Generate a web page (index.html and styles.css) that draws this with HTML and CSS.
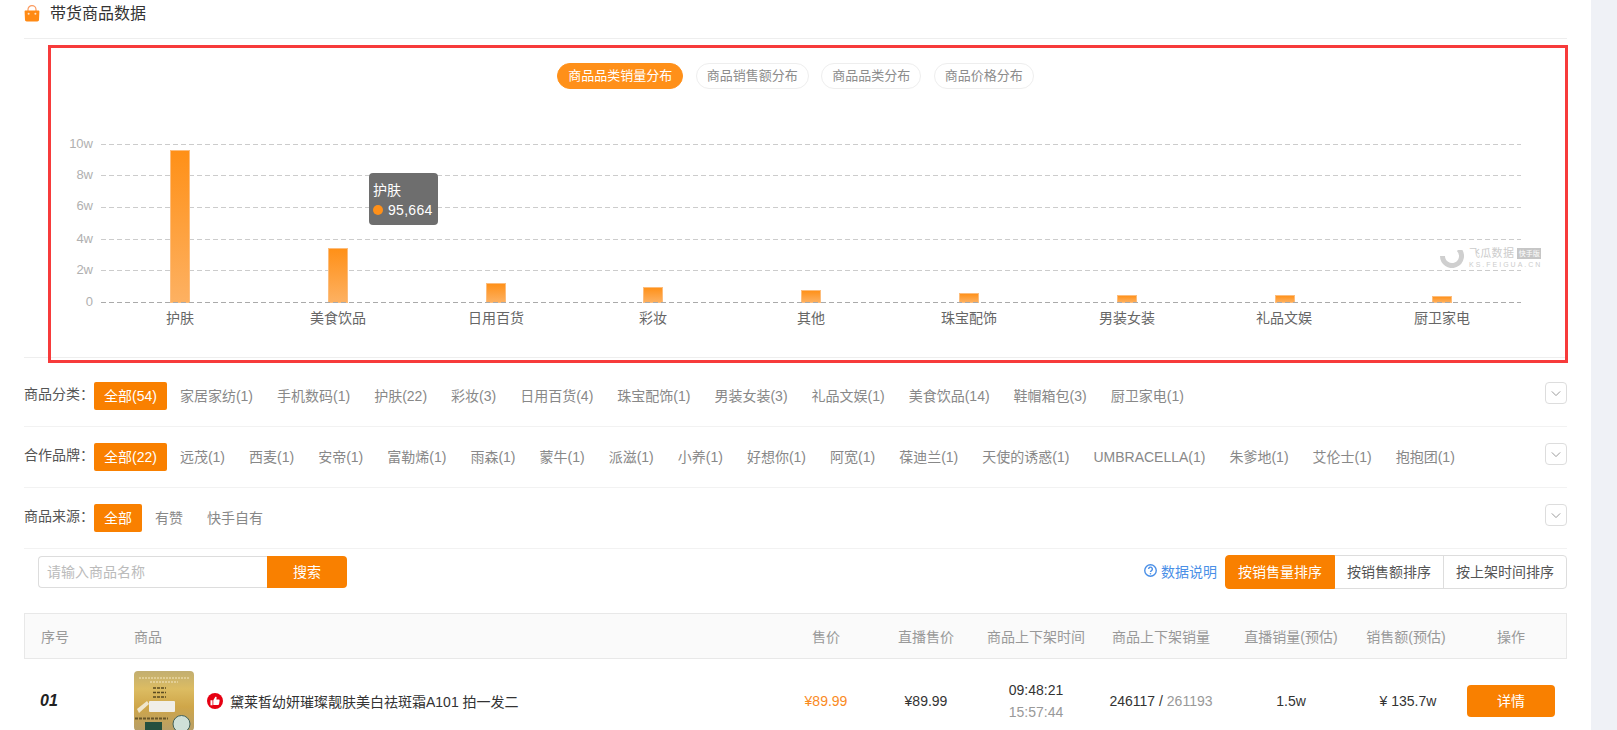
FILE: index.html
```html
<!DOCTYPE html>
<html lang="zh">
<head>
<meta charset="utf-8">
<title>带货商品数据</title>
<link rel="stylesheet" href="styles.css">
</head>
<body>
<main class="page">
  <header class="title-row">
    <svg class="bag" viewBox="0 0 16 17" width="16" height="17">
      <path class="bag-handle" d="M4 7V4.600a4 4 0 0 1 8 0V7"/>
      <path class="bag-body" d="M1.600 5.600h12.800c.6 0 1 .4 1 1l-.4 8.200c0 1-.8 1.700-1.700 1.700H2.700c-.9 0-1.700-.7-1.700-1.700L.6 6.600c0-.6.400-1 1-1z"/>
      <circle class="bag-dot" cx="4.600" cy="8.800" r="1"/>
      <circle class="bag-dot" cx="11.400" cy="8.800" r="1"/>
    </svg>
    <h1 class="title">带货商品数据</h1>
  </header>

  <section class="chart-section">
    <div class="tabs">
      <span class="tab tab-on">商品品类销量分布</span>
      <span class="tab">商品销售额分布</span>
      <span class="tab">商品品类分布</span>
      <span class="tab">商品价格分布</span>
    </div>
    <svg class="chart" viewBox="24 89 1543 268" width="1543" height="268">
      <defs>
        <linearGradient id="barfill" x1="0" y1="0" x2="0" y2="1">
          <stop offset="0" stop-color="#ff9017"/>
          <stop offset="1" stop-color="#fdb162"/>
        </linearGradient>
      </defs>
      <line class="grid" x1="101" x2="1521" y1="144.5" y2="144.5"/>
      <line class="grid" x1="101" x2="1521" y1="175.5" y2="175.5"/>
      <line class="grid" x1="101" x2="1521" y1="207.5" y2="207.5"/>
      <line class="grid" x1="101" x2="1521" y1="239.5" y2="239.5"/>
      <line class="grid" x1="101" x2="1521" y1="270.5" y2="270.5"/>
      <g class="bars">
        <rect x="170.5" y="150.5" width="19" height="152"/>
        <rect x="328.5" y="248.5" width="19" height="54"/>
        <rect x="486.5" y="283.5" width="19" height="19"/>
        <rect x="643.5" y="287.5" width="19" height="15"/>
        <rect x="801.5" y="290.5" width="19" height="12"/>
        <rect x="959.5" y="293.5" width="19" height="9"/>
        <rect x="1117.5" y="295.5" width="19" height="7"/>
        <rect x="1275.5" y="295.5" width="19" height="7"/>
        <rect x="1432.5" y="296.5" width="19" height="6"/>
      </g>
      <line class="grid grid-base" x1="101" x2="1521" y1="302.5" y2="302.5"/>
      <g class="y-labels">
        <text x="93" y="148">10w</text>
        <text x="93" y="179">8w</text>
        <text x="93" y="210">6w</text>
        <text x="93" y="243">4w</text>
        <text x="93" y="274">2w</text>
        <text x="93" y="306">0</text>
      </g>
      <g class="x-labels">
        <text x="180" y="323">护肤</text>
        <text x="338" y="323">美食饮品</text>
        <text x="496" y="323">日用百货</text>
        <text x="653" y="323">彩妆</text>
        <text x="811" y="323">其他</text>
        <text x="969" y="323">珠宝配饰</text>
        <text x="1127" y="323">男装女装</text>
        <text x="1284" y="323">礼品文娱</text>
        <text x="1442" y="323">厨卫家电</text>
      </g>
    </svg>
    <div class="tooltip">
      <div class="tip-name">护肤</div>
      <div class="tip-value"><i class="tip-dot"></i>95,664</div>
    </div>
    <div class="watermark">
      <svg class="wm-ring" viewBox="0 0 24 18" width="24" height="18">
        <path d="M2.500 6A9.500 9.500 0 1 0 18.700 -.7"/>
      </svg>
      <div class="wm-text">
        <div class="wm-top"><span class="wm-name">飞瓜数据</span><span class="wm-badge">快手版</span></div>
        <div class="wm-url">KS.FEIGUA.CN</div>
      </div>
    </div>
    <div class="highlight"></div>
  </section>

  <section class="filters">
    <div class="filter-row">
      <span class="filter-label">商品分类：</span>
      <div class="filter-items">
        <span class="item item-on">全部(54)</span>
        <span class="item">家居家纺(1)</span>
        <span class="item">手机数码(1)</span>
        <span class="item">护肤(22)</span>
        <span class="item">彩妆(3)</span>
        <span class="item">日用百货(4)</span>
        <span class="item">珠宝配饰(1)</span>
        <span class="item">男装女装(3)</span>
        <span class="item">礼品文娱(1)</span>
        <span class="item">美食饮品(14)</span>
        <span class="item">鞋帽箱包(3)</span>
        <span class="item">厨卫家电(1)</span>
      </div>
      <span class="toggle"><svg viewBox="0 0 12 8" width="10" height="7"><path d="M1 1.500l5 5 5-5"/></svg></span>
    </div>
    <div class="filter-row">
      <span class="filter-label">合作品牌：</span>
      <div class="filter-items">
        <span class="item item-on">全部(22)</span>
        <span class="item">远茂(1)</span>
        <span class="item">西麦(1)</span>
        <span class="item">安帝(1)</span>
        <span class="item">富勒烯(1)</span>
        <span class="item">雨森(1)</span>
        <span class="item">蒙牛(1)</span>
        <span class="item">派滋(1)</span>
        <span class="item">小养(1)</span>
        <span class="item">好想你(1)</span>
        <span class="item">阿宽(1)</span>
        <span class="item">葆迪兰(1)</span>
        <span class="item">天使的诱惑(1)</span>
        <span class="item">UMBRACELLA(1)</span>
        <span class="item">朱爹地(1)</span>
        <span class="item">艾伦士(1)</span>
        <span class="item">抱抱团(1)</span>
      </div>
      <span class="toggle"><svg viewBox="0 0 12 8" width="10" height="7"><path d="M1 1.500l5 5 5-5"/></svg></span>
    </div>
    <div class="filter-row">
      <span class="filter-label">商品来源：</span>
      <div class="filter-items">
        <span class="item item-on">全部</span>
        <span class="item">有赞</span>
        <span class="item">快手自有</span>
      </div>
      <span class="toggle"><svg viewBox="0 0 12 8" width="10" height="7"><path d="M1 1.500l5 5 5-5"/></svg></span>
    </div>
  </section>

  <section class="toolbar">
    <div class="search">
      <input class="search-input" type="text" placeholder="请输入商品名称">
      <span class="search-btn">搜索</span>
    </div>
    <div class="sort-area">
      <span class="help">
        <svg viewBox="0 0 14 14" width="13" height="13">
          <circle class="help-ring" cx="7" cy="7" r="6.200"/>
          <path class="help-mark" d="M5 5.400a2 2 0 1 1 3.100 1.700c-.7.500-1.100.8-1.100 1.600"/>
          <circle class="help-dot" cx="7" cy="10.500" r=".9"/>
        </svg>
        数据说明
      </span>
      <div class="sort">
        <span class="sort-btn sort-on">按销售量排序</span>
        <span class="sort-btn">按销售额排序</span>
        <span class="sort-btn">按上架时间排序</span>
      </div>
    </div>
  </section>

  <section class="table">
    <div class="tr th">
      <span class="seq">序号</span>
      <span class="goods-head">商品</span>
      <span class="cell">售价</span>
      <span class="cell">直播售价</span>
      <span class="cell">商品上下架时间</span>
      <span class="cell">商品上下架销量</span>
      <span class="cell">直播销量(预估)</span>
      <span class="cell">销售额(预估)</span>
      <span class="cell">操作</span>
    </div>
    <div class="tr td">
      <span class="seq seq-no">01</span>
      <div class="goods">
        <svg class="thumb" viewBox="0 0 60 60" width="60" height="60">
          <defs>
            <linearGradient id="gold" x1="0" y1="0" x2="0" y2="1">
              <stop offset="0" stop-color="#c2ae70"/>
              <stop offset=".3" stop-color="#dcbc62"/>
              <stop offset=".6" stop-color="#cfa649"/>
              <stop offset="1" stop-color="#b79f68"/>
            </linearGradient>
          </defs>
          <rect width="60" height="60" fill="url(#gold)"/>
          <path class="thumb-cap" d="M5 7h50M16 11h28"/>
          <path class="thumb-lines" d="M19 17h13M19 21.500h13M19 26h13"/>
          <path class="thumb-pack" d="M3 38l10-8 2 3-10 9z"/>
          <rect class="thumb-box" x="15" y="30" width="26" height="11" rx="1"/>
          <path class="thumb-band" d="M1 47.500h33"/>
          <rect class="thumb-green" x="11" y="51" width="17" height="9"/>
          <circle class="thumb-round" cx="47.500" cy="53" r="8.500"/>
        </svg>
        <svg class="like" viewBox="0 0 16 16" width="16" height="16">
          <circle class="like-bg" cx="8" cy="8" r="8"/>
          <path class="like-mark" d="M3.500 7.300h2v5h-2zM6.300 7.300l1.900-3.200c.5-.7 1.500-.3 1.400.6l-.2 1.900h2.300c.6 0 1 .5.9 1.100l-.6 3.500c-.1.500-.5.800-1 .8H6.300z"/>
        </svg>
        <span class="goods-name">黛莱皙幼妍璀璨靓肤美白祛斑霜A101 拍一发二</span>
      </div>
      <span class="cell price">¥89.99</span>
      <span class="cell">¥89.99</span>
      <span class="cell time">09:48:21<br><em class="muted">15:57:44</em></span>
      <span class="cell">246117 / <em class="muted">261193</em></span>
      <span class="cell">1.5w</span>
      <span class="cell cell-amount">¥ 135.7w</span>
      <span class="cell"><span class="detail-btn">详情</span></span>
    </div>
  </section>
</main>
</body>
</html>
```

FILE: styles.css
```css
* { box-sizing: border-box; }
html, body { margin: 0; height: 730px; overflow: hidden; }
body {
  background: #eff1f6;
  font-family: "Liberation Sans", "Noto Sans CJK SC", sans-serif;
  font-size: 14px;
  color: #333;
}
.page { width: 1591px; height: 730px; padding: 0 24px; background: #fff; overflow: hidden; }

.title-row { display: flex; align-items: center; height: 39px; padding-bottom: 10px; border-bottom: 1px solid #eee; }
.bag { margin-right: 10px; margin-top: -1px; }
.bag-handle { fill: none; stroke: #fb9a5e; stroke-width: 1.200; }
.bag-body { fill: #ff8a14; }
.bag-dot { fill: #ffe3c4; }
.title { margin: 0; font-size: 16px; font-weight: 400; color: #333; line-height: 26px; }

.chart-section { position: relative; height: 319px; padding-top: 24px; border-bottom: 1px solid #eee; }
.tabs { display: flex; justify-content: center; gap: 12.500px; }
.tab { height: 26px; line-height: 24px; padding: 0 10px; font-size: 13px; color: #8c8c8c; border: 1px solid #eee; border-radius: 13px; white-space: nowrap; }
.tab-on { background: #ff9019; border-color: #ff9019; color: #fff; }
.chart { display: block; }
.grid { stroke: #ccc; stroke-width: 1; stroke-dasharray: 5 3; }
.grid-base { stroke: #aaa; }
.bars rect { fill: url(#barfill); stroke: #fdbd7c; stroke-width: 1; }
.y-labels text { font-size: 13px; fill: #b0b0b0; text-anchor: end; }
.x-labels text { font-size: 14px; fill: #666; text-anchor: middle; }

.tooltip { position: absolute; left: 345px; top: 134px; width: 69px; height: 52px; padding: 7px 4px; background: #6e6e6e; border-radius: 4px; color: #fff; line-height: 20px; }
.tip-value { display: flex; align-items: center; letter-spacing: .3px; }
.tip-dot { width: 10px; height: 10px; margin-right: 5px; border-radius: 50%; background: #ff9019; }

.watermark { position: absolute; left: 1416px; top: 208px; display: flex; gap: 5px; color: #ccc; }
.wm-ring { margin-top: 3px; }
.wm-ring path { fill: none; stroke: #cfcfcf; stroke-width: 5; }
.wm-text { width: 74px; }
.wm-top { display: flex; align-items: center; height: 13px; gap: 3px; }
.wm-name { font-size: 11px; letter-spacing: .3px; line-height: 13px; white-space: nowrap; }
.wm-badge { height: 11px; padding: 0 1.500px; font-size: 7px; line-height: 11px; color: #fff; background: #c6c6c6; white-space: nowrap; }
.wm-url { margin-top: 0; font-size: 7px; line-height: 9px; letter-spacing: 2px; white-space: nowrap; }

.highlight { position: absolute; left: 24px; top: 6px; width: 1520px; height: 318px; border: 3px solid #f73b3b; pointer-events: none; }

.filters { padding-top: 8px; }
.filter-row { display: flex; align-items: flex-start; padding: 16px 0; border-bottom: 1px solid #f2f2f2; }
.filter-label { width: 70px; flex: none; line-height: 24px; color: #555; white-space: nowrap; }
.filter-items { display: flex; flex-wrap: wrap; gap: 4px; }
.item { height: 28px; line-height: 28px; padding: 0 10px; color: #888; white-space: nowrap; border-radius: 2px; }
.item-on { margin-right: -1px; background: #f98000; color: #fff; }
.toggle { display: flex; align-items: center; justify-content: center; width: 22px; height: 22px; margin-left: auto; border: 1px solid #ddd; border-radius: 4px; }
.toggle path { fill: none; stroke: #999; stroke-width: 1.200; }

.toolbar { display: flex; align-items: center; justify-content: space-between; margin-top: 6px; padding-left: 14px; height: 34px; }
.search { display: flex; }
.search-input { width: 229px; height: 32px; padding: 0 8px; border: 1px solid #ddd; border-right: 0; border-radius: 4px 0 0 4px; font: inherit; outline: none; }
.search-input::placeholder { color: #bbb; }
.search-btn { width: 80px; height: 32px; line-height: 32px; text-align: center; background: #f98000; color: #fff; border-radius: 0 4px 4px 0; }
.sort-area { display: flex; align-items: center; gap: 8px; }
.help { display: flex; align-items: center; gap: 4px; color: #4a8fe7; margin-top: -3px; }
.help-ring, .help-mark { fill: none; stroke: #4a8fe7; stroke-width: 1.500; }
.help-dot { fill: #4a8fe7; }
.sort { display: flex; }
.sort-btn { height: 34px; line-height: 32px; padding: 0 12px; margin-left: -1px; color: #555; border: 1px solid #ddd; white-space: nowrap; }
.sort-btn:first-child { margin-left: 0; border-radius: 4px 0 0 4px; }
.sort-btn:last-child { border-radius: 0 4px 4px 0; }
.sort-on { background: #f98000; border-color: #f98000; color: #fff; position: relative; }

.table { margin-top: 24px; }
.tr { display: grid; grid-template-columns: 109px 642px 100px 100px 120px 130px 130px 100px 110px; align-items: center; }
.th { height: 46px; background: #fafafa; border: 1px solid #e8e8e8; color: #999; }
.td { padding: 12px 1px; color: #333; }
.seq { padding-left: 16px; }
.seq-no { padding-left: 15px; font-size: 16px; font-weight: 700; font-style: italic; color: #222; }
.cell { text-align: center; white-space: nowrap; }
.cell-amount { padding-left: 4px; }
.price { color: #fa8a1e; }
.time { line-height: 22px; }
.muted { font-style: normal; color: #999; }
.goods { display: flex; align-items: center; }
.thumb { flex: none; border-radius: 4px; margin-right: 13px; }
.thumb-cap { stroke: #f3e5bd; stroke-width: 1.500; stroke-dasharray: 2 1; opacity: .7; }
.thumb-lines { stroke: #5a4a20; stroke-width: 1.500; stroke-dasharray: 3 1; }
.thumb-pack { fill: #efe6cd; }
.thumb-box { fill: #f0eee8; }
.thumb-band { stroke: #4a3d1a; stroke-width: 2; stroke-dasharray: 3 1; opacity: .75; }
.thumb-green { fill: #24503f; }
.thumb-round { fill: #cfe0d8; stroke: #41615a; stroke-width: 1; }
.like { flex: none; margin-right: 7px; }
.like-bg { fill: #e60012; }
.like-mark { fill: #fff; }
.goods-name { color: #333; white-space: nowrap; }
.detail-btn { display: inline-block; width: 88px; height: 32px; line-height: 32px; background: #f98000; color: #fff; border-radius: 4px; }
```
